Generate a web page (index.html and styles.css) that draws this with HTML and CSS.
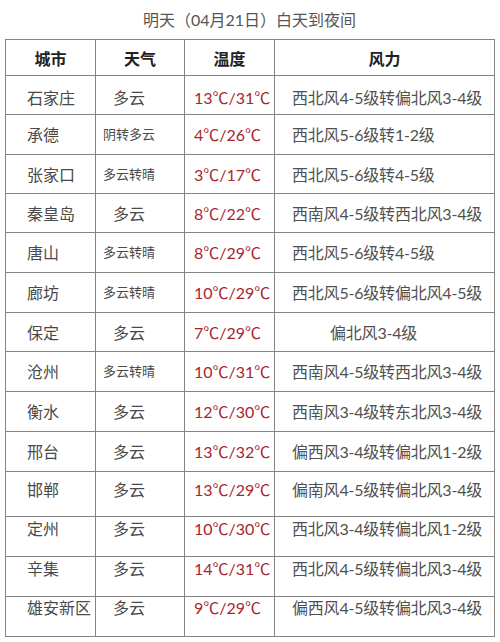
FILE: index.html
```html
<!DOCTYPE html>
<html lang="zh">
<head>
<meta charset="utf-8">
<link rel="stylesheet" href="styles.css">
</head>
<body>
<div class="page">
  <h1 class="title">明天（04月21日）白天到夜间</h1>
  <table class="weather">
    <colgroup>
      <col class="c-city"><col class="c-wx"><col class="c-temp"><col class="c-wind">
    </colgroup>
    <thead>
      <tr><th>城市</th><th>天气</th><th>温度</th><th>风力</th></tr>
    </thead>
    <tbody>
      <tr class="first"><td class="city">石家庄</td><td class="wx">多云</td><td class="temp">13℃/31℃</td><td class="wind">西北风4-5级转偏北风3-4级</td></tr>
      <tr><td class="city">承德</td><td class="wx sm">阴转多云</td><td class="temp">4℃/26℃</td><td class="wind">西北风5-6级转1-2级</td></tr>
      <tr class="short"><td class="city">张家口</td><td class="wx sm">多云转晴</td><td class="temp">3℃/17℃</td><td class="wind">西北风5-6级转4-5级</td></tr>
      <tr class="short"><td class="city">秦皇岛</td><td class="wx">多云</td><td class="temp">8℃/22℃</td><td class="wind">西南风4-5级转西北风3-4级</td></tr>
      <tr><td class="city">唐山</td><td class="wx sm">多云转晴</td><td class="temp">8℃/29℃</td><td class="wind">西北风5-6级转4-5级</td></tr>
      <tr><td class="city">廊坊</td><td class="wx sm">多云转晴</td><td class="temp">10℃/29℃</td><td class="wind">西北风5-6级转偏北风4-5级</td></tr>
      <tr class="short"><td class="city">保定</td><td class="wx">多云</td><td class="temp">7℃/29℃</td><td class="wind indent">偏北风3-4级</td></tr>
      <tr><td class="city">沧州</td><td class="wx sm">多云转晴</td><td class="temp">10℃/31℃</td><td class="wind">西南风4-5级转西北风3-4级</td></tr>
      <tr><td class="city">衡水</td><td class="wx">多云</td><td class="temp">12℃/30℃</td><td class="wind">西南风3-4级转东北风3-4级</td></tr>
      <tr><td class="city">邢台</td><td class="wx">多云</td><td class="temp">13℃/32℃</td><td class="wind">偏西风3-4级转偏北风1-2级</td></tr>
      <tr class="tall"><td class="city">邯郸</td><td class="wx">多云</td><td class="temp">13℃/29℃</td><td class="wind">偏南风4-5级转偏北风3-4级</td></tr>
      <tr class="up short"><td class="city">定州</td><td class="wx">多云</td><td class="temp">10℃/30℃</td><td class="wind">西北风3-4级转偏北风1-2级</td></tr>
      <tr class="up"><td class="city">辛集</td><td class="wx">多云</td><td class="temp">14℃/31℃</td><td class="wind">西北风4-5级转偏北风3-4级</td></tr>
      <tr class="last"><td class="city">雄安新区</td><td class="wx">多云</td><td class="temp">9℃/29℃</td><td class="wind">偏西风4-5级转偏北风3-4级</td></tr>
    </tbody>
  </table>
</div>
</body>
</html>
```

FILE: styles.css
```css
html, body {
  margin: 0;
  padding: 0;
  background: #fff;
}
body {
  font-family: Lato, "Noto Sans CJK SC", sans-serif;
  color: #4a4a4a;
}
.page {
  width: 500px;
  padding: 0 0 0 5px;
  box-sizing: border-box;
}
.title {
  margin: 0;
  height: 39px;
  line-height: 40px;
  font-size: 16px;
  font-weight: normal;
  text-align: center;
  color: #555;
  padding-right: 6px;
}
.weather {
  border-collapse: collapse;
  table-layout: fixed;
  width: 489px;
  font-size: 16px;
}
.c-city { width: 90px; }
.c-wx { width: 89px; }
.c-temp { width: 90px; }
.c-wind { width: 220px; }
.weather th,
.weather td {
  border: 1px solid #858585;
  padding: 0;
  white-space: nowrap;
  overflow: hidden;
}
.weather th {
  height: 35px;
  font-weight: bold;
  color: #222;
  text-align: center;
  font-size: 16px;
}
.weather td {
  height: 39px;
  line-height: 23px;
}
.weather .short td {
  height: 38px;
}
.weather .first td {
  height: 34px;
  padding-top: 4px;
}
.weather .tall td {
  height: 34px;
  padding-bottom: 10px;
}
.weather .up td {
  height: 23px;
  padding-bottom: 16px;
}
.weather .up.short td {
  height: 22px;
}
.weather .last td {
  vertical-align: top;
  line-height: 22px;
}
.weather td.city {
  padding-left: 21px;
  text-align: left;
}
.weather td.wx {
  text-align: center;
  padding-right: 22px;
}
.wx.sm {
  font-size: 13px;
}
.weather td.temp {
  color: #a8262b;
  padding-left: 9px;
  text-align: left;
}
.weather td.wind {
  text-align: left;
  padding-left: 17px;
  letter-spacing: -0.2px;
  color: #505050;
}
.weather td.wind.indent {
  padding-left: 55px;
}
```
